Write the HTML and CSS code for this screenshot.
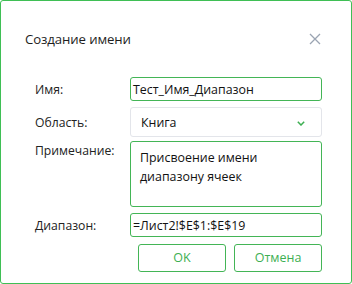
FILE: index.html
```html
<!DOCTYPE html>
<html lang="ru">
<head>
<meta charset="utf-8">
<link rel="stylesheet" href="styles.css">
</head>
<body>
<div class="dialog">
  <div class="header">
    <div class="title">Создание имени</div>
    <svg class="close" width="12" height="12" viewBox="0 0 12 12"><path d="M1 1L11 11M11 1L1 11" stroke="#9aa4b2" stroke-width="1.3" fill="none"/></svg>
  </div>
  <div class="form">
    <div class="label row-name">Имя:</div>
    <div class="field input green">Тест_Имя_Диапазон</div>
    <div class="label row-scope">Область:</div>
    <div class="field select">
      <span>Книга</span>
      <svg class="chev" width="8" height="5" viewBox="0 0 8 5"><path d="M0.8 0.8L4 4L7.2 0.8" stroke="#3daf52" stroke-width="1.5" fill="none"/></svg>
    </div>
    <div class="label row-note">Примечание:</div>
    <div class="field textarea green">Присвоение имени<br>диапазону ячеек</div>
    <div class="label row-range">Диапазон:</div>
    <div class="field input green">=Лист2!$E$1:$E$19</div>
  </div>
  <div class="buttons">
    <div class="btn">OK</div>
    <div class="btn">Отмена</div>
  </div>
</div>
</body>
</html>
```

FILE: styles.css
```css
* { box-sizing: border-box; }
html, body { margin: 0; padding: 0; background: #fff; }
body { font-family: "Open Sans", "Noto Sans", sans-serif; color: #222; }
.dialog {
  width: 352px;
  height: 284px;
  border: 1px solid #3fbf55;
  border-radius: 3px;
  background: #fff;
  display: flex;
  flex-direction: column;
}
.header {
  display: flex;
  align-items: center;
  justify-content: space-between;
  padding: 27px 30px 0 24px;
  height: 48px;
}
.title { font-size: 13.2px; color: #1e1e1e; letter-spacing: -0.1px; }
.form {
  margin-top: 28px;
  padding: 0 29px 0 34px;
  display: grid;
  grid-template-columns: 95px 192px;
  grid-template-rows: 24px 30px 64px 24px;
  row-gap: 6px;
}
.form > :nth-child(5), .form > :nth-child(6) { margin-top: -2px; }
.label { font-size: 12.2px; color: #222; display: flex; align-items: center; }
.row-note { align-items: flex-start; padding-top: 1px; }
.field { font-size: 12.4px; color: #111; border-radius: 3px; }
.green { border: 1px solid #43b556; }
.input { padding: 0 2px; display: flex; align-items: center; }
.select {
  border: 1px solid #e3e5ea;
  display: flex;
  align-items: center;
  justify-content: space-between;
  padding: 1px 16px 0 10px;
}
.chev { margin-top: 1px; }
.textarea { padding: 6px 9px; line-height: 19px; }
.buttons {
  display: flex;
  justify-content: flex-end;
  gap: 8px;
  padding: 7px 29px 0 0;
}
.btn {
  width: 88px;
  height: 28px;
  border: 1px solid #43b556;
  border-radius: 3px;
  color: #3daf52;
  font-size: 12.5px;
  display: flex;
  align-items: center;
  justify-content: center;
  padding-bottom: 1px;
}
```
